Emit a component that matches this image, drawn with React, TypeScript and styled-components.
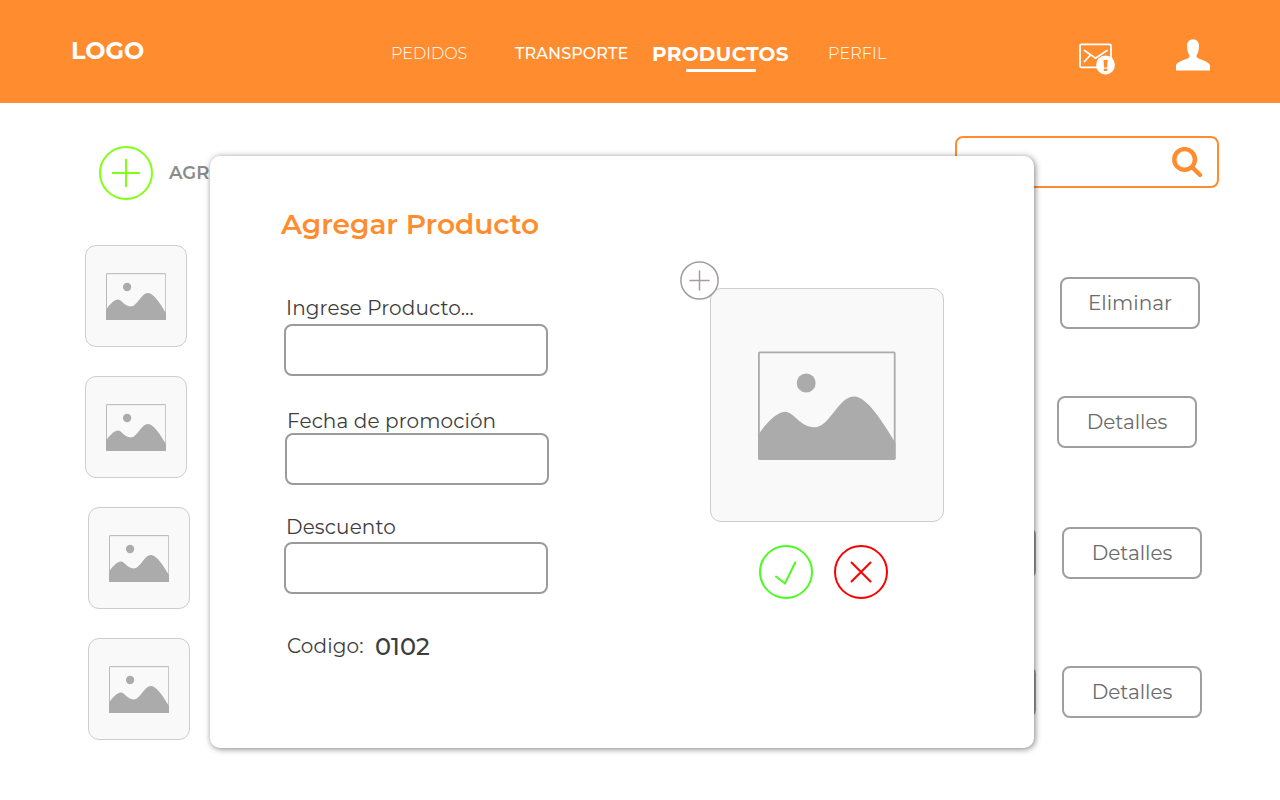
import React from "react";
import styled, { createGlobalStyle } from "styled-components";

const orange = "#ff8d2f";

const GlobalStyle = createGlobalStyle`
  * { box-sizing: border-box; }
  body {
    margin: 0;
    background: #fff;
    font-family: "Montserrat", "Inter", sans-serif;
    overflow: hidden;
  }
  button { font-family: inherit; cursor: pointer; }
  svg { display: block; flex: none; }
`;

const Page = styled.div`
  position: relative;
  width: 1280px;
  height: 800px;
  overflow: hidden;
`;

const Header = styled.header`
  display: flex;
  height: 103px;
  background: ${orange};
  color: #fff;
`;

const Logo = styled.div`
  width: 391px;
  padding: 36px 0 0 71px;
  font-size: 24px;
  font-weight: 700;
  line-height: 30px;
`;

const Nav = styled.nav`
  display: flex;
  padding-top: 42px;
  width: 618px;
`;

const NavItem = styled.a<{ $w: number; $size?: number; $weight?: number; $ls?: number }>`
  display: flex;
  flex-direction: column;
  width: ${(p) => p.$w}px;
  font-size: ${(p) => p.$size ?? 16}px;
  font-weight: ${(p) => p.$weight ?? 300};
  letter-spacing: ${(p) => p.$ls ?? 0}px;
  line-height: 24px;
  white-space: nowrap;
`;

const ActiveBar = styled.span`
  width: 70px;
  height: 3px;
  margin: 3px 0 0 34px;
  border-radius: 1px;
  background: #fff;
`;

const HeaderIcons = styled.div`
  display: flex;
  gap: 61px;
  padding: 39px 0 0 70px;
`;

const Toolbar = styled.div`
  display: flex;
  justify-content: space-between;
  padding: 33px 61px 0 99px;
  height: 142px;
`;

const AddAction = styled.div`
  display: flex;
  align-items: center;
  gap: 16px;
  height: 54px;
  margin-top: 10px;
  color: #8b8b8b;
  font-size: 18px;
  font-weight: 600;
`;

const SearchBox = styled.div`
  display: flex;
  justify-content: flex-end;
  width: 264px;
  height: 52px;
  padding: 9px 14px 0 0;
  border: 2px solid ${orange};
  border-radius: 8px;
`;

const List = styled.main`
  display: flex;
  flex-direction: column;
  gap: 29px;
`;

const Row = styled.div<{ $left: number; $right: number }>`
  display: flex;
  justify-content: space-between;
  height: 102px;
  padding: 0 ${(p) => p.$right}px 0 ${(p) => p.$left}px;
`;

const RowActions = styled.div<{ $top: number }>`
  display: flex;
  gap: 26px;
  padding-top: ${(p) => p.$top}px;
`;

const RowButton = styled.button`
  width: 140px;
  height: 52px;
  padding: 0;
  border: 2px solid #9f9f9f;
  border-radius: 8px;
  background: #fff;
  color: #6b6b6b;
  font-size: 20px;
  font-weight: 400;
`;

const ImageFrame = styled.div<{ $size: number; $drop?: number }>`
  display: flex;
  align-items: center;
  justify-content: center;
  width: ${(p) => p.$size}px;
  height: ${(p) => p.$size}px;
  padding-top: ${(p) => p.$drop ?? 0}px;
  border: 1px solid #cdcdcd;
  border-radius: 11px;
  background: #f9f9f9;
`;

const Modal = styled.section`
  position: absolute;
  left: 210px;
  top: 156px;
  display: flex;
  width: 824px;
  height: 592px;
  border-radius: 10px;
  background: #fff;
  box-shadow: 1px 1px 6px rgba(0, 0, 0, 0.5);
`;

const Form = styled.div`
  width: 500px;
  padding: 48px 0 0 74px;
`;

const Title = styled.h1`
  margin: 0 0 52px -3px;
  color: ${orange};
  font-size: 28px;
  font-weight: 600;
  letter-spacing: -0.04px;
  line-height: 40px;
  white-space: nowrap;
`;

const Field = styled.label<{ $gap: number; $after: number; $shift?: number }>`
  display: flex;
  flex-direction: column;
  gap: ${(p) => p.$gap}px;
  margin: 0 0 ${(p) => p.$after}px ${(p) => p.$shift ?? 0}px;
`;

const Label = styled.span`
  padding-left: 2px;
  color: #3d3d3d;
  font-size: 20px;
  font-weight: 400;
  letter-spacing: 0.12px;
  line-height: 24px;
  white-space: nowrap;
`;

const Input = styled.input`
  width: 264px;
  height: 52px;
  border: 2px solid #9b9b9b;
  border-radius: 8px;
  background: #fff;
  outline: none;
`;

const CodeLine = styled.div`
  display: flex;
  align-items: flex-start;
  padding-left: 1px;
`;

const CodeLabel = styled(Label)`
  width: 90px;
`;

const Code = styled.span`
  color: #3d3d3d;
  font-size: 24px;
  font-weight: 500;
  line-height: 26px;
`;

const Preview = styled.div`
  display: flex;
  flex-direction: column;
  padding-top: 132px;
`;

const Picture = styled.div`
  position: relative;
`;

const AddPicture = styled.button`
  position: absolute;
  left: -31px;
  top: -28px;
  padding: 0;
  border: 0;
  background: none;
`;

const Decision = styled.div`
  display: flex;
  gap: 21px;
  padding: 23px 0 0 49px;
`;

const ImageIcon = ({ width, line }: { width: number; line: number }) => (
  <svg width={width} height={(width * 109) / 138} viewBox="0 -0.5 138 109">
    <rect x={line / 2} y={line / 2} width={137.6 - line} height={108.5 - line} rx="1" fill="none" stroke="#ababab" strokeWidth={line} />
    <circle cx="48.2" cy="31.5" r="9.5" fill="#ababab" />
    <path d="M.3 83C8 72 19 60.3 27 60.3C36 60.3 42 75.8 56.3 75.8C72 75.8 80 45 96.3 45C109 45 125 71 137.5 91.5V107Q137.5 108.5 136 108.5H2Q.3 108.5 .3 107Z" fill="#ababab" />
  </svg>
);

const PlusCircle = () => (
  <svg width="54" height="54" viewBox="0 0 54 54" fill="none" stroke="#83ff14" strokeWidth="2">
    <circle cx="27" cy="27" r="26" />
    <path d="M13 27H41M27 13V41" />
  </svg>
);

const MailAlert = () => (
  <svg width="36" height="37" viewBox="0 0 36 37" fill="none" stroke="#fff" strokeWidth="1.8" strokeLinecap="round">
    <rect x="1" y="5.4" width="31" height="23" rx="1.5" />
    <path d="M5.5 11.5L16.5 19.2L28 11.5M11 16.5L5.5 22.5" />
    <circle cx="26.5" cy="26" r="9.4" fill="#fff" stroke="none" />
    <path d="M24.5 21H28.6L28.1 28.5H25ZM24.8 29.6H28.3V32H24.8Z" fill={orange} stroke="none" />
  </svg>
);

const UserIcon = () => (
  <svg width="34" height="32" viewBox="0 0 34 32">
    <path d="M17 .2C20.7 .2 23 3 23 7C23 11 22 14 20.6 16.2V18.2C23 20.5 34 22.5 34 26.5V31.6H0V26.5C0 22.5 11 20.5 13.4 18.2V16.2C12 14 11 11 11 7C11 3 13.3 .2 17 .2Z" fill="#fff" />
  </svg>
);

const SearchIcon = () => (
  <svg width="31" height="31" viewBox="0 0 31 31" fill="none" stroke={orange} strokeLinecap="round">
    <circle cx="12.6" cy="12.4" r="10.3" strokeWidth="4.4" />
    <path d="M20.5 20.5L28 28" strokeWidth="4.4" />
  </svg>
);

const rows = [
  { left: 85, right: 80, top: 32, label: "Eliminar", extra: false },
  { left: 85, right: 83, top: 20, label: "Detalles", extra: false },
  { left: 88, right: 78, top: 20, label: "Detalles", extra: true },
  { left: 88, right: 78, top: 28, label: "Detalles", extra: true },
];

export default function App() {
  return (
    <Page>
      <GlobalStyle />
      <Header>
        <Logo>LOGO</Logo>
        <Nav>
          <NavItem $w={124}>PEDIDOS</NavItem>
          <NavItem $w={137} $weight={500} $ls={0.1}>TRANSPORTE</NavItem>
          <NavItem $w={176} $size={20} $weight={700} $ls={0.27}>
            PRODUCTOS
            <ActiveBar />
          </NavItem>
          <NavItem $w={80} $ls={0.12}>PERFIL</NavItem>
        </Nav>
        <HeaderIcons>
          <MailAlert />
          <UserIcon />
        </HeaderIcons>
      </Header>
      <Toolbar>
        <AddAction>
          <PlusCircle />
          <span>AGREGAR</span>
        </AddAction>
        <SearchBox>
          <SearchIcon />
        </SearchBox>
      </Toolbar>
      <List>
        {rows.map((r, i) => (
          <Row key={i} $left={r.left} $right={r.right}>
            <ImageFrame $size={102} $drop={1}>
              <ImageIcon width={60.4} line={2} />
            </ImageFrame>
            <RowActions $top={r.top}>
              {r.extra && <RowButton aria-hidden />}
              <RowButton>{r.label}</RowButton>
            </RowActions>
          </Row>
        ))}
      </List>
      <Modal>
        <Form>
          <Title>Agregar Producto</Title>
          <Field $gap={4} $after={33}>
            <Label>Ingrese Producto...</Label>
            <Input />
          </Field>
          <Field $gap={0} $after={30} $shift={1}>
            <Label>Fecha de promoción</Label>
            <Input />
          </Field>
          <Field $gap={3} $after={40}>
            <Label>Descuento</Label>
            <Input />
          </Field>
          <CodeLine>
            <CodeLabel>Codigo:</CodeLabel>
            <Code>0102</Code>
          </CodeLine>
        </Form>
        <Preview>
          <Picture>
            <ImageFrame $size={234}>
              <ImageIcon width={138} line={1.8} />
            </ImageFrame>
            <AddPicture aria-label="Agregar imagen">
              <svg width="40" height="40" viewBox="0 0 40 40" fill="none" stroke="#a49d9d" strokeWidth="1.5" strokeLinecap="round">
                <circle cx="20.5" cy="20.5" r="18.6" fill="#fff" />
                <path d="M11 20.5H30M20.5 11V30" />
              </svg>
            </AddPicture>
          </Picture>
          <Decision>
            <svg width="54" height="54" viewBox="0 0 54 54" fill="none" stroke="#4dfb23" strokeWidth="2" strokeLinecap="round">
              <circle cx="27" cy="27" r="26" />
              <path d="M17 31.5L26 38.5L36.2 17.5" />
            </svg>
            <svg width="54" height="54" viewBox="0 0 54 54" fill="none" stroke="#fb0000" strokeWidth="2" strokeLinecap="round">
              <circle cx="27" cy="27" r="26" />
              <path d="M17.5 17.5L36.5 36.5M36.5 17.5L17.5 36.5" />
            </svg>
          </Decision>
        </Preview>
      </Modal>
    </Page>
  );
}
